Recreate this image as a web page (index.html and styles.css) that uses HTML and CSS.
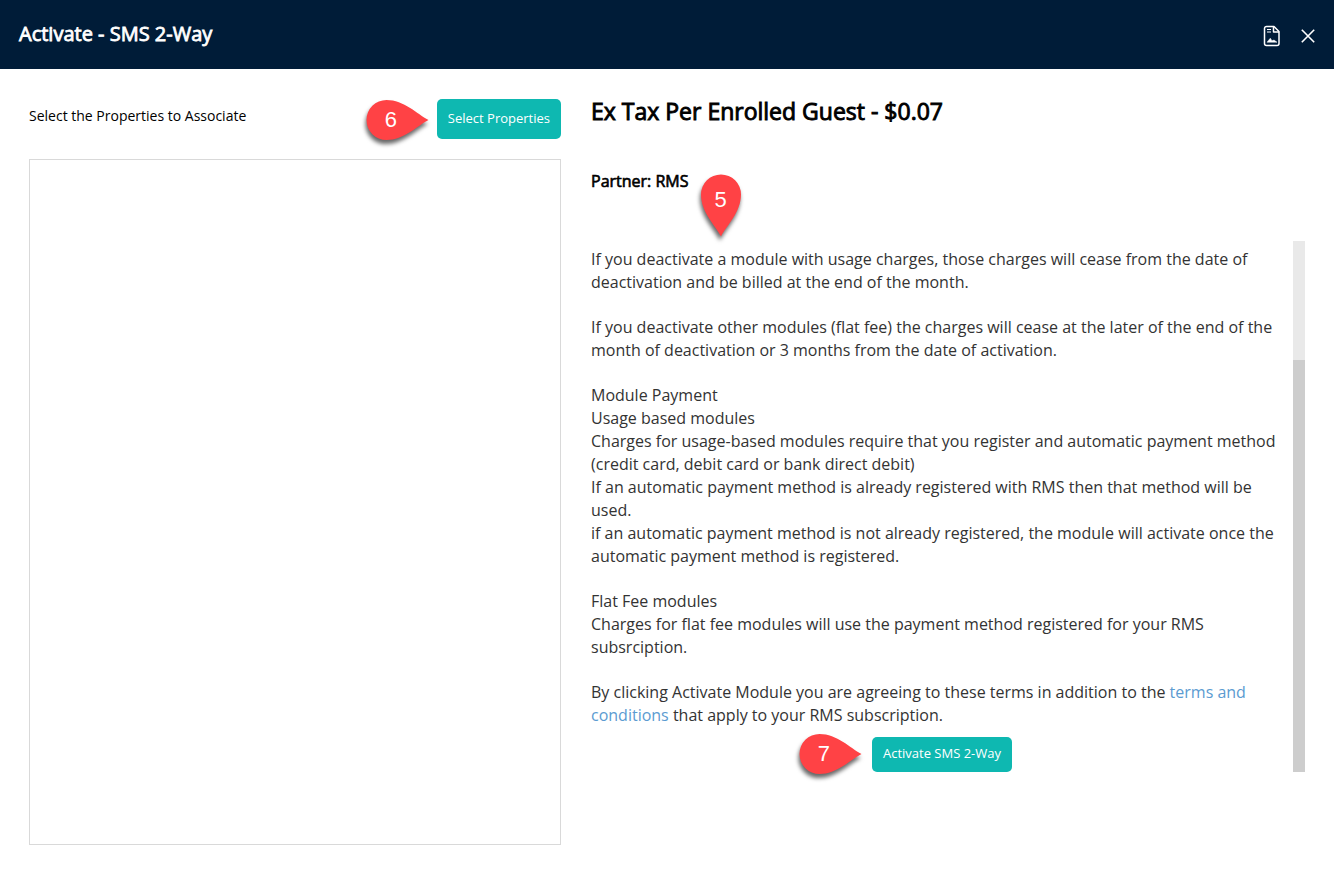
FILE: index.html
```html
<!DOCTYPE html>
<html lang="en">
<head>
<meta charset="utf-8">
<meta name="viewport" content="width=device-width, initial-scale=1">
<title>Activate - SMS 2-Way</title>
<link rel="stylesheet" href="styles.css">
</head>
<body>
<header class="bar">
  <h1 class="bar-title">Activate - SMS 2-Way</h1>
  <div class="bar-actions">
    <button class="icon-btn" type="button" aria-label="Report">
      <svg width="18" height="22" viewBox="0 0 18 22" fill="none" stroke="currentColor" stroke-width="1.5" stroke-linejoin="round">
        <path d="M3.500 1.500h7.500l5 5v12a2 2 0 0 1-2 2H3.500a2 2 0 0 1-2-2v-15a2 2 0 0 1 2-2z"/>
        <path d="M10.500 1.500V7h5.500"/>
        <path d="M4 4.500h4M4 7h4" stroke-width="1.200"/>
        <path d="M4 17.200l3.300-4 1.700 2.600 2-.8 3 2.200z" fill="currentColor" stroke-width=".5"/>
      </svg>
    </button>
    <button class="icon-btn" type="button" aria-label="Close">
      <svg width="14" height="14" viewBox="0 0 14 14" fill="none" stroke="currentColor" stroke-width="1.600"><path d="M.8.8l12.400 12.400M13.200.8L.8 13.200"/></svg>
    </button>
  </div>
</header>
<main class="content">
  <section class="properties">
    <div class="properties-head">
      <h2 class="label">Select the Properties to Associate</h2>
      <div class="anchor">
        <button class="btn btn-tall" type="button">Select Properties</button>
        <div class="pin pin-side">
          <svg class="pin-shape" width="63" height="42" viewBox="0 0 63 42"><path d="M62.500 21C51 27 38 41 20.500 41A20 20 0 0 1 20.500 1C38 1 51 15 62.500 21z"/></svg>
          <span class="pin-num">6</span>
        </div>
      </div>
    </div>
    <div class="list"></div>
  </section>
  <section class="details">
    <h2 class="price">Ex Tax Per Enrolled Guest - $0.07</h2>
    <div class="anchor partner-row">
      <h3 class="partner">Partner: RMS</h3>
      <div class="pin pin-down">
        <svg class="pin-shape" width="42" height="63" viewBox="0 0 42 63"><path d="M21 62.500C15 51 1 38 1 20.500A20 20 0 0 1 41 20.500C41 38 27 51 21 62.500z"/></svg>
        <span class="pin-num">5</span>
      </div>
    </div>
    <div class="terms">
      <div class="terms-body">
        <p>If you deactivate a module with usage charges, those charges will cease from the date of deactivation and be billed at the end of the month.</p>
        <p>If you deactivate other modules (flat fee) the charges will cease at the later of the end of the month of deactivation or 3 months from the date of activation.</p>
        <p>Module Payment<br>Usage based modules<br>Charges for usage-based modules require that you register and automatic payment method (credit card, debit card or bank direct debit)<br>If an automatic payment method is already registered with RMS then that method will be used.<br>if an automatic payment method is not already registered, the module will activate once the automatic payment method is registered.</p>
        <p>Flat Fee modules<br>Charges for flat fee modules will use the payment method registered for your RMS subsrciption.</p>
        <p>By clicking Activate Module you are agreeing to these terms in addition to the <a class="link" href="#terms">terms and conditions</a> that apply to your RMS subscription.</p>
        <div class="anchor activate">
          <button class="btn" type="button">Activate SMS 2-Way</button>
          <div class="pin pin-side">
            <svg class="pin-shape" width="63" height="42" viewBox="0 0 63 42"><path d="M62.500 21C51 27 38 41 20.500 41A20 20 0 0 1 20.500 1C38 1 51 15 62.500 21z"/></svg>
            <span class="pin-num">7</span>
          </div>
        </div>
      </div>
      <div class="track" aria-hidden="true"><div class="thumb"></div></div>
    </div>
  </section>
</main>
</body>
</html>
```
FILE: styles.css
```css
* { box-sizing: border-box; }

body {
  margin: 0;
  min-height: 100vh;
  display: flex;
  flex-direction: column;
  background: #fff;
  color: #000;
  font-family: "Open Sans", "Noto Sans", sans-serif;
  font-size: 16px;
  font-weight: 400;
}

h1, h2, h3, p { margin: 0; font-weight: 400; }

h1, .price, .partner { -webkit-text-stroke: 0.04em currentColor; }

.bar {
  display: flex;
  justify-content: space-between;
  align-items: center;
  padding: 20px 19px 21px;
  background: #001c38;
  color: #fff;
}

.bar-title { font-size: 20px; line-height: 28px; }

.bar-actions {
  display: flex;
  align-items: center;
  gap: 20px;
  padding-top: 3px;
}

.icon-btn {
  display: flex;
  padding: 0;
  border: 0;
  background: none;
  color: inherit;
  cursor: pointer;
}

.content {
  flex: 1;
  display: grid;
  grid-template-columns: 532fr 714fr;
  gap: 30px;
  padding: 30px 29px 29px;
}

.properties { display: flex; flex-direction: column; gap: 20px; }

.properties-head {
  display: flex;
  justify-content: space-between;
}

.label { font-size: 14px; line-height: 34px; }

.list { flex: 1; border: 1px solid #d9d9d9; }

.anchor { position: relative; }

.btn {
  display: block;
  padding: 6px 11px 9px;
  border: 0;
  border-radius: 5px;
  background: #0eb8b1;
  color: #fff;
  font-family: inherit;
  font-size: 13px;
  line-height: 20px;
  cursor: pointer;
}

.btn-tall { padding: 9px 11px 11px; }

.price { font-size: 23px; line-height: 24px; }

.partner-row { width: fit-content; margin: 46px 0 47px; }

.partner { font-size: 16px; line-height: 25px; }

.terms { display: flex; color: #333; }

.terms-body {
  flex: 1;
  display: flex;
  flex-direction: column;
  gap: 22px;
  padding-top: 7px;
  line-height: 23px;
}

.link { color: #5b9bd1; text-decoration: none; }

.activate { align-self: center; margin-top: -12px; }

.track {
  width: 12px;
  display: flex;
  flex-direction: column;
  background: #e9e9e9;
}

.track::before { content: ""; flex: 119; }

.thumb { flex: 412; background: #cdcdcd; }

.pin {
  position: absolute;
  display: flex;
  color: #fff;
  font-family: "Liberation Sans", Arial, sans-serif;
  font-size: 22px;
}

.pin-shape { fill: #ff4245; filter: drop-shadow(-1px 4px 2px rgba(0, 0, 0, 0.6)); }

.pin-num { position: absolute; line-height: 42px; width: 50px; text-align: center; }

.pin-side { right: 100%; top: 0; margin-right: 8px; }

.activate .pin-side { margin: -4px 10px 0 0; }

.pin-down { left: 100%; top: 5px; margin-left: 11px; }

.pin-down .pin-num { width: 42px; line-height: 52px; }
```
